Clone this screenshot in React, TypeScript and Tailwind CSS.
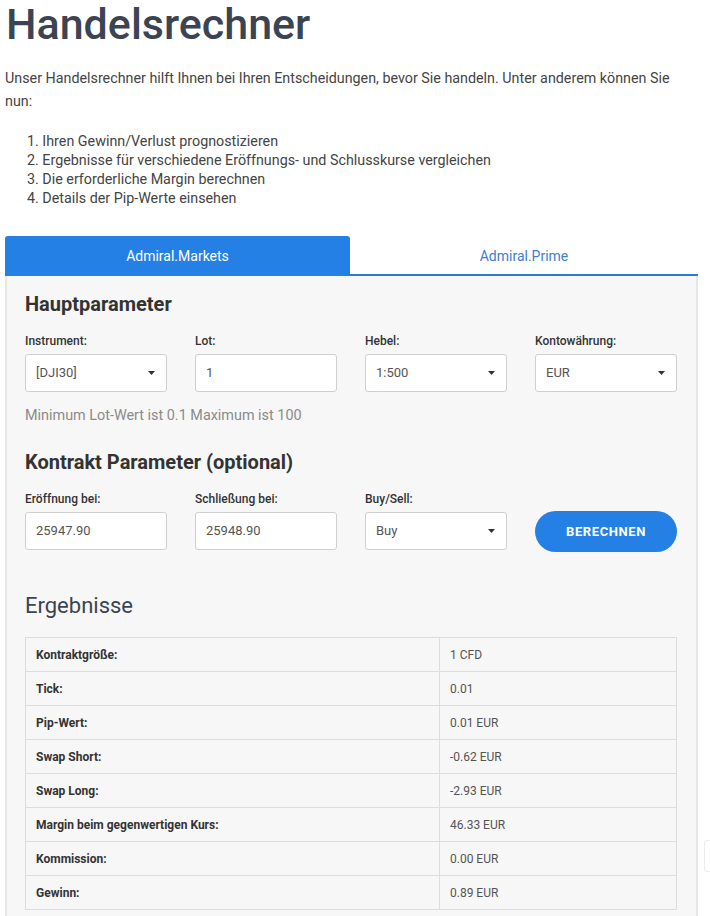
import React from "react";

const blue = "#2580e6";

function Caret() {
  return (
    <svg width="7" height="4" viewBox="0 0 7 4" className="shrink-0">
      <path d="M0 0h7L3.5 4z" fill="#333" />
    </svg>
  );
}

function Field({ label, value, select }: { label: string; value: string; select?: boolean }) {
  return (
    <div className="flex flex-col">
      <label className="text-[12px] leading-[16px] font-medium text-[#333] mb-[5px]">{label}</label>
      <div className="h-[38px] bg-white border border-[#cfcfcf] rounded-[3px] flex items-center justify-between pl-[10px] pr-[11px] text-[13px] text-[#555]">
        <span>{value}</span>
        {select && <Caret />}
      </div>
    </div>
  );
}

const rows: [string, string][] = [
  ["Kontraktgröße:", "1 CFD"],
  ["Tick:", "0.01"],
  ["Pip-Wert:", "0.01 EUR"],
  ["Swap Short:", "-0.62 EUR"],
  ["Swap Long:", "-2.93 EUR"],
  ["Margin beim gegenwertigen Kurs:", "46.33 EUR"],
  ["Kommission:", "0.00 EUR"],
  ["Gewinn:", "0.89 EUR"],
];

export default function App() {
  return (
    <div className="relative w-[710px] min-h-[916px] bg-white px-[5px] overflow-hidden" style={{ fontFamily: "Roboto, 'Noto Sans', Arial, sans-serif" }}>
      <h1 className="text-[43px] leading-[52px] -mt-[2px] -mb-[2px] font-medium text-[#3b4452] ml-[1px]">Handelsrechner</h1>
      <p className="mt-[19px] text-[14.3px] leading-[23px] text-[#444] pr-[20px]">
        Unser Handelsrechner hilft Ihnen bei Ihren Entscheidungen, bevor Sie handeln. Unter anderem können Sie nun:
      </p>
      <ol className="mt-[19px] pl-[22px] text-[14.3px] leading-[19px] text-[#444]">
        <li>1. Ihren Gewinn/Verlust prognostizieren</li>
        <li>2. Ergebnisse für verschiedene Eröffnungs- und Schlusskurse vergleichen</li>
        <li>3. Die erforderliche Margin berechnen</li>
        <li>4. Details der Pip-Werte einsehen</li>
      </ol>

      <div className="mt-[28px] w-[693px]">
        <div className="flex h-[40px]">
          <div className="w-[345px] rounded-t-[3px] flex items-center justify-center text-[14px] text-white" style={{ background: blue }}>
            Admiral.Markets
          </div>
          <div className="flex-1 flex items-center justify-center text-[14px] text-[#3d7dd2] border-b-2 border-[#2f79cf] pt-[2px]">
            Admiral.Prime
          </div>
        </div>

        <div className="bg-[#f7f7f7] border-x-2 border-[#e7e7e7] pl-[18px] pr-[19px] pt-[14px] pb-[10px]">
          <h2 className="text-[20px] leading-[28px] font-bold text-[#333]">Hauptparameter</h2>
          <div className="mt-[15px] grid grid-cols-4 gap-x-[28px]">
            <Field label="Instrument:" value="[DJI30]" select />
            <Field label="Lot:" value="1" />
            <Field label="Hebel:" value="1:500" select />
            <Field label="Kontowährung:" value="EUR" select />
          </div>
          <p className="mt-[14px] text-[14.4px] leading-[20px] text-[#8a8a8a]">Minimum Lot-Wert ist 0.1 Maximum ist 100</p>

          <h2 className="mt-[22px] text-[20px] leading-[28px] font-bold text-[#333]">Kontrakt Parameter (optional)</h2>
          <div className="mt-[15px] grid grid-cols-4 gap-x-[28px] items-end">
            <Field label="Eröffnung bei:" value="25947.90" />
            <Field label="Schließung bei:" value="25948.90" />
            <Field label="Buy/Sell:" value="Buy" select />
            <button className="h-[41px] mb-[-2px] rounded-full text-white text-[13px] font-bold tracking-[0.6px]" style={{ background: blue }}>
              BERECHNEN
            </button>
          </div>

          <h2 className="mt-[41px] text-[22px] leading-[30px] text-[#3b4452]">Ergebnisse</h2>
          <table className="mt-[16px] w-full border-collapse text-[12px]">
            <tbody>
              {rows.map(([k, v]) => (
                <tr key={k} className="h-[34px]">
                  <td className="border border-[#dddddd] pl-[10px] font-bold text-[#333] w-[414px]">{k}</td>
                  <td className="border border-[#dddddd] pl-[10px] text-[#555]">{v}</td>
                </tr>
              ))}
            </tbody>
          </table>
        </div>
      </div>

      <div className="absolute right-[-6px] top-[840px] w-[12px] h-[32px] rounded-[3px] border border-[#ececec] bg-white" />
    </div>
  );
}
